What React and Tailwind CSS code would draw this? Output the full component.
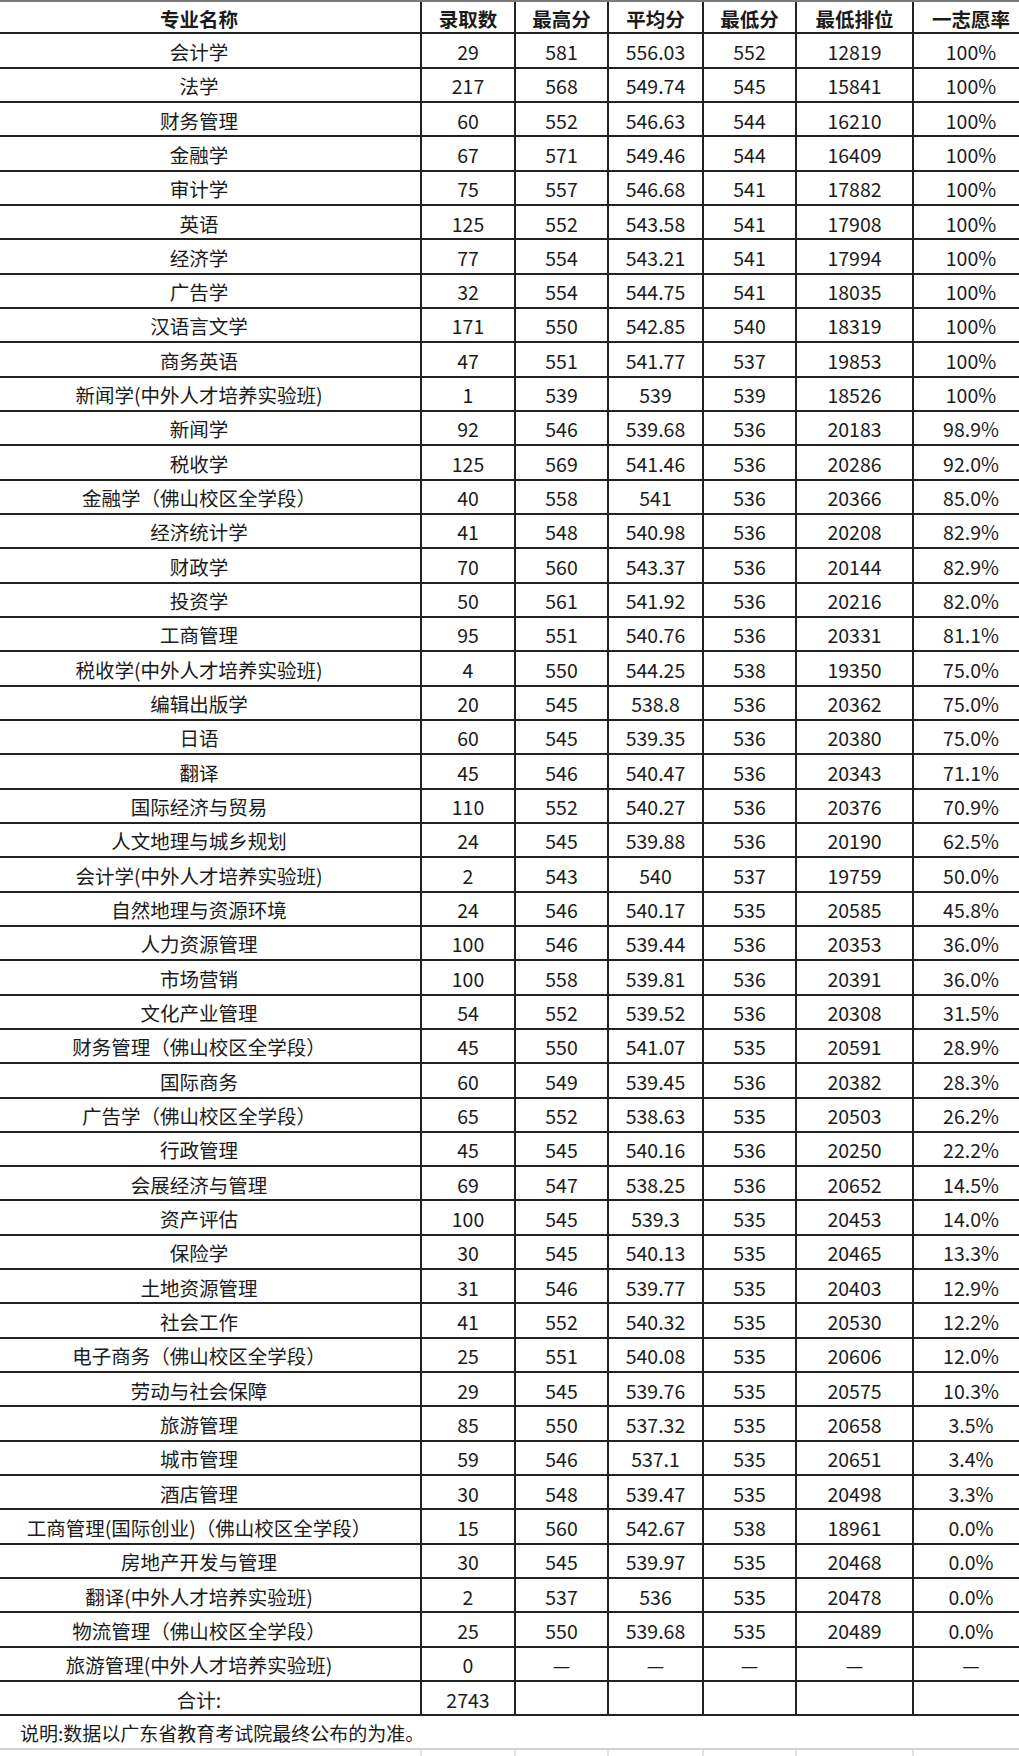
import React from 'react';

const ROWS = [
  ['会计学', '29', '581', '556.03', '552', '12819', '100%'],
  ['法学', '217', '568', '549.74', '545', '15841', '100%'],
  ['财务管理', '60', '552', '546.63', '544', '16210', '100%'],
  ['金融学', '67', '571', '549.46', '544', '16409', '100%'],
  ['审计学', '75', '557', '546.68', '541', '17882', '100%'],
  ['英语', '125', '552', '543.58', '541', '17908', '100%'],
  ['经济学', '77', '554', '543.21', '541', '17994', '100%'],
  ['广告学', '32', '554', '544.75', '541', '18035', '100%'],
  ['汉语言文学', '171', '550', '542.85', '540', '18319', '100%'],
  ['商务英语', '47', '551', '541.77', '537', '19853', '100%'],
  ['新闻学(中外人才培养实验班)', '1', '539', '539', '539', '18526', '100%'],
  ['新闻学', '92', '546', '539.68', '536', '20183', '98.9%'],
  ['税收学', '125', '569', '541.46', '536', '20286', '92.0%'],
  ['金融学（佛山校区全学段）', '40', '558', '541', '536', '20366', '85.0%'],
  ['经济统计学', '41', '548', '540.98', '536', '20208', '82.9%'],
  ['财政学', '70', '560', '543.37', '536', '20144', '82.9%'],
  ['投资学', '50', '561', '541.92', '536', '20216', '82.0%'],
  ['工商管理', '95', '551', '540.76', '536', '20331', '81.1%'],
  ['税收学(中外人才培养实验班)', '4', '550', '544.25', '538', '19350', '75.0%'],
  ['编辑出版学', '20', '545', '538.8', '536', '20362', '75.0%'],
  ['日语', '60', '545', '539.35', '536', '20380', '75.0%'],
  ['翻译', '45', '546', '540.47', '536', '20343', '71.1%'],
  ['国际经济与贸易', '110', '552', '540.27', '536', '20376', '70.9%'],
  ['人文地理与城乡规划', '24', '545', '539.88', '536', '20190', '62.5%'],
  ['会计学(中外人才培养实验班)', '2', '543', '540', '537', '19759', '50.0%'],
  ['自然地理与资源环境', '24', '546', '540.17', '535', '20585', '45.8%'],
  ['人力资源管理', '100', '546', '539.44', '536', '20353', '36.0%'],
  ['市场营销', '100', '558', '539.81', '536', '20391', '36.0%'],
  ['文化产业管理', '54', '552', '539.52', '536', '20308', '31.5%'],
  ['财务管理（佛山校区全学段）', '45', '550', '541.07', '535', '20591', '28.9%'],
  ['国际商务', '60', '549', '539.45', '536', '20382', '28.3%'],
  ['广告学（佛山校区全学段）', '65', '552', '538.63', '535', '20503', '26.2%'],
  ['行政管理', '45', '545', '540.16', '536', '20250', '22.2%'],
  ['会展经济与管理', '69', '547', '538.25', '536', '20652', '14.5%'],
  ['资产评估', '100', '545', '539.3', '535', '20453', '14.0%'],
  ['保险学', '30', '545', '540.13', '535', '20465', '13.3%'],
  ['土地资源管理', '31', '546', '539.77', '535', '20403', '12.9%'],
  ['社会工作', '41', '552', '540.32', '535', '20530', '12.2%'],
  ['电子商务（佛山校区全学段）', '25', '551', '540.08', '535', '20606', '12.0%'],
  ['劳动与社会保障', '29', '545', '539.76', '535', '20575', '10.3%'],
  ['旅游管理', '85', '550', '537.32', '535', '20658', '3.5%'],
  ['城市管理', '59', '546', '537.1', '535', '20651', '3.4%'],
  ['酒店管理', '30', '548', '539.47', '535', '20498', '3.3%'],
  ['工商管理(国际创业)（佛山校区全学段）', '15', '560', '542.67', '538', '18961', '0.0%'],
  ['房地产开发与管理', '30', '545', '539.97', '535', '20468', '0.0%'],
  ['翻译(中外人才培养实验班)', '2', '537', '536', '535', '20478', '0.0%'],
  ['物流管理（佛山校区全学段）', '25', '550', '539.68', '535', '20489', '0.0%'],
  ['旅游管理(中外人才培养实验班)', '0', '—', '—', '—', '—', '—'],
];

const HEAD = ['专业名称', '录取数', '最高分', '平均分', '最低分', '最低排位', '一志愿率'];

// column widths; the sheet is cropped on both sides, so the first and last run off the page
const COLS = ['w-[444px]', 'w-[94px]', 'w-[93px]', 'w-[95px]', 'w-[93px]', 'w-[117px]', 'w-[116px]'];

function Row({ cells, head, top }) {
  return (
    <div
      className={`flex h-[34.34px] border-b-2 border-[#222] ${top ? 'border-t-2 border-t-[#7a7a7a]' : ''} ${
        head ? 'font-bold text-[19.5px]' : 'text-[19.5px]'
      }`}
    >
      {cells.map((c, i) => (
        <div
          key={i}
          className={`${COLS[i]} shrink-0 flex items-center justify-center pt-[2px] border-r-2 border-[#222] whitespace-nowrap`}
        >
          {c}
        </div>
      ))}
    </div>
  );
}

export default function App() {
  return (
    <div
      className="w-[1019px] h-[1756px] overflow-hidden bg-white text-[#1b1b1b]"
      style={{ fontFamily: '"Noto Sans CJK SC", "Noto Sans", sans-serif' }}
    >
      <div className="ml-[-22px] w-[1052px]">
        <Row cells={HEAD} head top />
        {ROWS.map((r, i) => (
          <Row key={i} cells={r} />
        ))}
        <Row cells={['合计:', '2743', '', '', '', '', '']} />

        <div className="h-[32px] flex items-center pl-[42px] pt-[2px] text-[19px]">
          说明:数据以广东省教育考试院最终公布的为准。
        </div>

        <div className="flex h-[12px] border-t-2 border-[#d2d2d2]">
          {COLS.map((w, i) => (
            <div key={i} className={`${w} shrink-0 border-r-2 border-[#e2e2e2]`} />
          ))}
        </div>
      </div>
    </div>
  );
}
